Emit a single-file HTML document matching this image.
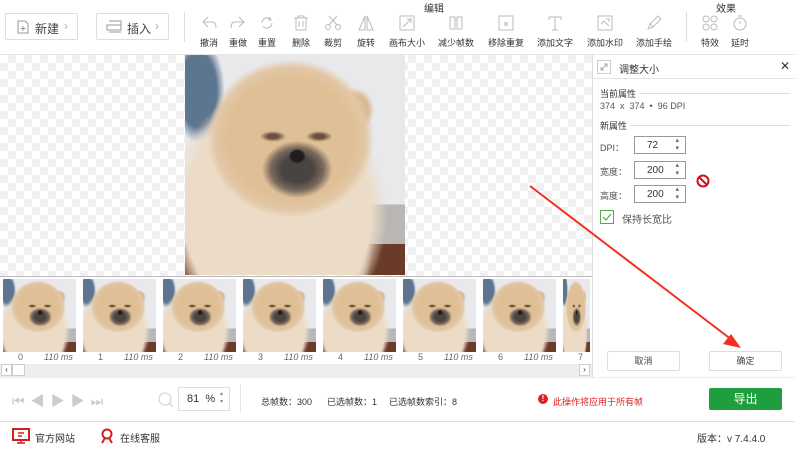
<!DOCTYPE html>
<html><head><meta charset="utf-8"><style>
*{margin:0;padding:0;box-sizing:border-box}
body{width:795px;height:450px;overflow:hidden;background:#fff;font-family:"Liberation Sans","Noto Sans CJK SC",sans-serif;font-size:10px;color:#333;position:relative}
.a{position:absolute}
.btn{position:absolute;border:1px solid #ddd;border-radius:2px;background:#fff;font-size:12px;color:#444}
.tool{position:absolute;top:14px;width:34px;text-align:center;font-size:9px;color:#333}
.tool svg{display:block;margin:0 auto 4px;width:18px;height:18px}
.dog{position:absolute;background:
radial-gradient(ellipse 4% 3.5% at 51% 46%,#1e1e1e 70%,transparent 100%),
radial-gradient(ellipse 16% 13% at 51% 52%,#4a4440 45%,#7a6a5e 75%,transparent 100%),
radial-gradient(ellipse 6% 2.5% at 40% 37%,#6a5040 40%,transparent 100%),
radial-gradient(ellipse 6% 2.5% at 61% 37%,#6a5040 40%,transparent 100%),
radial-gradient(ellipse 38% 36% at 48% 38%,#dfbf96 75%,#e2c7a6 90%,transparent 100%),
radial-gradient(ellipse 9% 10% at 77% 25%,#d9b890 70%,transparent 100%),
radial-gradient(ellipse 50% 58% at 42% 72%,#ecdcc7 85%,transparent 100%),
radial-gradient(ellipse 40% 40% at 45% 90%,#e9d8c2 85%,transparent 100%),
linear-gradient(to bottom,transparent 86%,#6a3c28 86%),
linear-gradient(to bottom,transparent 68%,#b9b7b5 68%),
radial-gradient(ellipse 12% 24% at 6% 16%,#5d7690 70%,transparent 100%),
#e9e8ea}
.fr{position:absolute;top:279px;width:73px;height:73px}
.lb{position:absolute;top:352px;font-size:9px;color:#666}
.lb i{position:absolute;left:26px;top:0;white-space:nowrap}
.chk{background-color:#fff;background-image:linear-gradient(45deg,#f0f0f0 25%,transparent 25%,transparent 75%,#f0f0f0 75%),linear-gradient(45deg,#f0f0f0 25%,transparent 25%,transparent 75%,#f0f0f0 75%);background-size:16px 16px;background-position:0 0,8px 8px}
.inp{position:absolute;left:634px;width:52px;height:18px;border:1px solid #999;font-size:10px;padding:3px 0 0 12px;background:#fff}
.inp:after{content:"▴\A▾";white-space:pre;position:absolute;right:6px;top:0;font-size:7px;line-height:8px;color:#666}
</style></head><body>
<div class="btn" style="left:5px;top:13px;width:73px;height:27px"><svg class="a" style="left:11px;top:6px" width="12" height="14"><path d="M1 1h7l3 3v9H1z" fill="none" stroke="#999"/><path d="M6 6v5M3.5 8.5h5" stroke="#999"/></svg><span class="a" style="left:29px;top:6px">新建</span><span class="a" style="left:58px;top:5px;color:#aaa">›</span></div>
<div class="btn" style="left:96px;top:13px;width:73px;height:27px"><svg class="a" style="left:9px;top:6px" width="18" height="14"><path d="M3 1h12v4M1 5h14v5H1zM3 12h12" fill="none" stroke="#999"/></svg><span class="a" style="left:30px;top:6px">插入</span><span class="a" style="left:58px;top:5px;color:#aaa">›</span></div>
<div class="a" style="left:184px;top:12px;width:1px;height:30px;background:#ddd"></div>
<div class="a" style="left:424px;top:0;font-size:10px">编辑</div>
<div class="a" style="left:716px;top:0;font-size:10px">效果</div>
<div class="a" style="left:686px;top:12px;width:1px;height:30px;background:#ddd"></div>
<div class="tool" style="left:192px"><svg><path d="M8 3L3 8l5 5M3 8h9c3 0 4 3 4 6" fill="none" stroke="#bbb"/></svg>撤消</div>
<div class="tool" style="left:221px"><svg><path d="M10 3l5 5-5 5M15 8H6c-3 0-4 3-4 6" fill="none" stroke="#bbb"/></svg>重做</div>
<div class="tool" style="left:250px"><svg><path d="M4 9a5 5 0 0 1 9-3M14 9a5 5 0 0 1-9 3M12 3l1 3-3 0" fill="none" stroke="#bbb"/></svg>重置</div>
<div class="tool" style="left:284px"><svg><path d="M2 4h14M6 4V2h6v2M4 4v12h10V4M7 7v6M11 7v6" fill="none" stroke="#bbb"/></svg>删除</div>
<div class="tool" style="left:316px"><svg><circle cx="4" cy="13" r="2.5" fill="none" stroke="#bbb"/><circle cx="14" cy="13" r="2.5" fill="none" stroke="#bbb"/><path d="M5 11L13 2M13 11L5 2" stroke="#bbb"/></svg>裁剪</div>
<div class="tool" style="left:349px"><svg><path d="M8 2v14H2zM10 2v14h6z" fill="none" stroke="#bbb"/></svg>旋转</div>
<div class="tool" style="left:388px;width:38px"><svg><rect x="2" y="2" width="14" height="14" fill="none" stroke="#bbb"/><path d="M5 13l8-8M9 5h4v4" fill="none" stroke="#bbb"/></svg>画布大小</div>
<div class="tool" style="left:436px;width:40px"><svg><path d="M3 3h5v12H3zM10 3h5v12h-5z" fill="none" stroke="#bbb"/></svg>减少帧数</div>
<div class="tool" style="left:486px;width:40px"><svg><rect x="2" y="2" width="14" height="14" fill="none" stroke="#bbb"/><path d="M7 8l4 4M11 8l-4 4" stroke="#bbb"/></svg>移除重复</div>
<div class="tool" style="left:535px;width:40px"><svg><path d="M3 3h12v3M9 3v13M6 16h6M3 3v3" fill="none" stroke="#bbb"/></svg>添加文字</div>
<div class="tool" style="left:585px;width:40px"><svg><rect x="2" y="2" width="14" height="14" fill="none" stroke="#bbb"/><path d="M5 10l3-3 5 5M10 5h3v3" fill="none" stroke="#bbb"/></svg>添加水印</div>
<div class="tool" style="left:634px;width:40px"><svg><path d="M3 15l2-5 8-8 3 3-8 8zM5 10l3 3" fill="none" stroke="#bbb"/></svg>添加手绘</div>
<div class="tool" style="left:693px"><svg><circle cx="5" cy="5" r="3" fill="none" stroke="#bbb"/><circle cx="13" cy="5" r="3" fill="none" stroke="#bbb"/><circle cx="5" cy="13" r="3" fill="none" stroke="#bbb"/><circle cx="13" cy="13" r="3" fill="none" stroke="#bbb"/></svg>特效</div>
<div class="tool" style="left:723px"><svg><circle cx="9" cy="10" r="6" fill="none" stroke="#bbb"/><path d="M7 2h4M9 10V7" stroke="#bbb"/></svg>延时</div>
<div class="a" style="left:0;top:54px;width:795px;height:1px;background:#e5e5e5"></div>
<div class="a chk" style="left:0;top:55px;width:592px;height:221px"></div>
<div class="dog" style="left:185px;top:55px;width:220px;height:220px"></div>
<div class="a" style="left:0;top:276px;width:592px;height:1px;background:#bbb"></div>
<div class="a" style="left:0;top:277px;width:592px;height:87px;background:#fff"></div>
<div class="dog fr" style="left:3px"></div><div class="dog fr" style="left:83px"></div><div class="dog fr" style="left:163px"></div><div class="dog fr" style="left:243px"></div><div class="dog fr" style="left:323px"></div><div class="dog fr" style="left:403px"></div><div class="dog fr" style="left:483px"></div><div class="dog fr" style="left:563px;width:27px"></div>
<div class="lb" style="left:18px">0<i>110 ms</i></div><div class="lb" style="left:98px">1<i>110 ms</i></div><div class="lb" style="left:178px">2<i>110 ms</i></div><div class="lb" style="left:258px">3<i>110 ms</i></div><div class="lb" style="left:338px">4<i>110 ms</i></div><div class="lb" style="left:418px">5<i>110 ms</i></div><div class="lb" style="left:498px">6<i>110 ms</i></div><div class="lb" style="left:578px">7</div>
<div class="a" style="left:0;top:364px;width:592px;height:13px;background:#eee"></div>
<div class="a" style="left:1px;top:364px;width:11px;height:12px;border:1px solid #ccc;background:#fff;font-size:8px;text-align:center">‹</div>
<div class="a" style="left:12px;top:364px;width:13px;height:12px;border:1px solid #ccc;background:#fff"></div>
<div class="a" style="left:579px;top:364px;width:11px;height:12px;border:1px solid #ccc;background:#fff;font-size:8px;text-align:center">›</div>
<div class="a" style="left:592px;top:55px;width:1px;height:322px;background:#ddd"></div>
<div class="a" style="left:593px;top:78px;width:202px;height:1px;background:#e5e5e5"></div>
<svg class="a" style="left:597px;top:60px" width="14" height="14"><rect x=".5" y=".5" width="13" height="13" fill="none" stroke="#ccc"/><path d="M4 10l6-6M7 4h3v3M4 7v3h3" fill="none" stroke="#aaa"/></svg>
<div class="a" style="left:619px;top:61px">调整大小</div>
<div class="a" style="left:780px;top:59px;font-size:12px">✕</div>
<div class="a" style="left:600px;top:87px;font-size:9px">当前属性</div>
<div class="a" style="left:640px;top:93px;width:150px;height:1px;background:#ddd"></div>
<div class="a" style="left:600px;top:101px;font-size:9px;color:#555">374 &nbsp;x &nbsp;374 &nbsp;• &nbsp;96 DPI</div>
<div class="a" style="left:600px;top:119px;font-size:9px">新属性</div>
<div class="a" style="left:630px;top:125px;width:160px;height:1px;background:#ddd"></div>
<div class="a" style="left:600px;top:141px;font-size:9px;color:#555">DPI：</div><div class="inp" style="top:136px">72</div>
<div class="a" style="left:600px;top:165px;font-size:9px;color:#555">宽度：</div><div class="inp" style="top:161px">200</div>
<div class="a" style="left:600px;top:189px;font-size:9px;color:#555">高度：</div><div class="inp" style="top:185px">200</div>
<svg class="a" style="left:696px;top:174px" width="14" height="14"><circle cx="7" cy="7" r="5.5" fill="none" stroke="#d01020" stroke-width="2"/><path d="M3 3l8 8" stroke="#d01020" stroke-width="2"/></svg>
<div class="a" style="left:600px;top:210px;width:14px;height:14px;border:1px solid #5a5"></div>
<svg class="a" style="left:602px;top:213px" width="10" height="8"><path d="M1 4l3 3 5-6" fill="none" stroke="#3a3"/></svg>
<div class="a" style="left:622px;top:211px;font-size:10px;color:#555">保持长宽比</div>
<div class="btn" style="left:607px;top:351px;width:73px;height:20px;font-size:9px;text-align:center;line-height:18px">取消</div>
<div class="btn" style="left:709px;top:351px;width:73px;height:20px;font-size:9px;text-align:center;line-height:18px">确定</div>
<svg class="a" style="left:0;top:0" width="795" height="450"><line x1="530" y1="186" x2="732" y2="340" stroke="#f03020" stroke-width="2"/><path d="M741 348l-18-4 8-10z" fill="#f03020"/></svg>
<div class="a" style="left:0;top:377px;width:795px;height:1px;background:#eee"></div>
<div class="a" style="left:12px;top:391px;font-size:14px;color:#ccc;letter-spacing:6px">⏮◀▶▶⏭</div>
<svg class="a" style="left:157px;top:391px" width="18" height="18"><circle cx="8" cy="8" r="6" fill="none" stroke="#ccc"/><path d="M12 12l4 4" stroke="#ccc"/></svg>
<div class="a" style="left:178px;top:387px;width:52px;height:24px;border:1px solid #ddd;font-size:11px;padding:5px 0 0 8px">81 &nbsp;%</div>
<div class="a" style="left:220px;top:390px;font-size:6px;line-height:8px;color:#888">▴<br>▾</div>
<div class="a" style="left:240px;top:384px;width:1px;height:28px;background:#e5e5e5"></div>
<div class="a" style="left:261px;top:395px;font-size:9px">总帧数：300</div>
<div class="a" style="left:327px;top:395px;font-size:9px">已选帧数：1</div>
<div class="a" style="left:389px;top:395px;font-size:9px">已选帧数索引：8</div>
<div class="a" style="left:538px;top:394px;width:10px;height:10px;border-radius:5px;background:#e02020;color:#fff;font-size:8px;text-align:center;line-height:10px;font-weight:bold">!</div>
<div class="a" style="left:553px;top:395px;font-size:9px;color:#e02020">此操作将应用于所有帧</div>
<div class="a" style="left:709px;top:388px;width:73px;height:22px;background:#1e9e3e;border-radius:2px;color:#fff;font-size:12px;text-align:center;line-height:22px">导出</div>
<div class="a" style="left:0;top:421px;width:795px;height:1px;background:#ddd"></div>
<svg class="a" style="left:12px;top:428px" width="18" height="16"><rect x="1" y="1" width="16" height="11" fill="none" stroke="#d02020" stroke-width="2"/><path d="M5 15h8M9 12v3M6 5h6M6 8h4" stroke="#d02020" stroke-width="1.5"/></svg>
<div class="a" style="left:35px;top:430px;font-size:10px">官方网站</div>
<svg class="a" style="left:100px;top:428px" width="14" height="16"><circle cx="7" cy="6" r="4.5" fill="none" stroke="#d02020" stroke-width="2"/><path d="M2 15l3-5M12 15l-3-5" stroke="#d02020" stroke-width="2"/></svg>
<div class="a" style="left:120px;top:430px;font-size:10px">在线客服</div>
<div class="a" style="left:697px;top:430px;font-size:10px">版本：v 7.4.4.0</div>
</body></html>
